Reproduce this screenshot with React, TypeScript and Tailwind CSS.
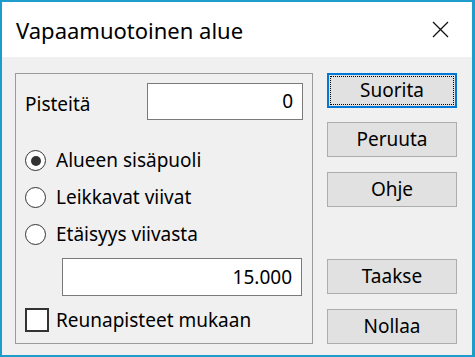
import React from "react";

const font = { fontFamily: '"Noto Sans", "Open Sans", sans-serif' };

function Radio({ label, checked }: { label: string; checked?: boolean }) {
  return (
    <div className="flex h-[37px] items-center">
      <span className="flex h-[21px] w-[21px] items-center justify-center rounded-full border-[1.5px] border-[#333] bg-white">
        {checked && <span className="h-[10px] w-[10px] rounded-full bg-[#333]" />}
      </span>
      <span className="ml-[10px] text-[19px] leading-none text-black">{label}</span>
    </div>
  );
}

function Button({ label, focused }: { label: string; focused?: boolean }) {
  return (
    <button
      className={
        focused
          ? "flex h-[35px] w-[130px] items-center justify-center border-2 border-[#0078d7] bg-[#e1e1e1] p-[1px]"
          : "flex h-[35px] w-[130px] items-center justify-center border border-[#adadad] bg-[#e1e1e1]"
      }
    >
      {focused ? (
        <span className="flex h-full w-full items-center justify-center border border-dotted border-black text-[19px] leading-none text-black">
          {label}
        </span>
      ) : (
        <span className="text-[19px] leading-none text-black">{label}</span>
      )}
    </button>
  );
}

export default function App() {
  return (
    <div
      style={font}
      className="flex h-[357px] w-[475px] flex-col border-t-2 border-l-2 border-r-[3px] border-b-2 border-[#1e9ccc] bg-[#f0f0f0]"
    >
      {/* title bar */}
      <div className="flex h-[55px] shrink-0 items-center justify-between bg-white pl-[14px] pr-[23px]">
        <span className="text-[22px] leading-none text-black">Vapaamuotoinen alue</span>
        <svg width="17" height="17" viewBox="0 0 17 17" aria-hidden="true">
          <path d="M1 1 L16 16 M16 1 L1 16" stroke="#111" strokeWidth="1.3" />
        </svg>
      </div>

      <div className="flex pl-[13px] pt-[16px]">
        {/* group box */}
        <div className="h-[271px] w-[298px] border border-[#9a9a9a] px-[9px] pt-[9px]">
          <div className="flex h-[37px] items-center justify-between">
            <span className="pt-[5px] text-[19px] leading-none text-black">Pisteitä</span>
            <div className="flex h-[37px] w-[156px] items-center justify-end border border-[#7a7a7a] bg-white pr-[9px] text-[19px] leading-none text-black">
              0
            </div>
          </div>
          <div className="mt-[22px]">
            <Radio label="Alueen sisäpuoli" checked />
            <Radio label="Leikkavat viivat" />
            <Radio label="Etäisyys viivasta" />
          </div>
          <div className="ml-[37px] mt-[5px] flex h-[38px] w-[240px] items-center justify-end border border-[#7a7a7a] bg-white pr-[9px] text-[19px] leading-none text-black">
            15.000
          </div>
          <div className="mt-[12px] flex h-[24px] items-center">
            <span className="h-[24px] w-[24px] border-2 border-[#333] bg-white" />
            <span className="ml-[7px] text-[19px] leading-none text-black">Reunapisteet mukaan</span>
          </div>
        </div>

        {/* buttons */}
        <div className="ml-[14px] flex flex-col">
          <Button label="Suorita" focused />
          <div className="mt-[14px]">
            <Button label="Peruuta" />
          </div>
          <div className="mt-[15px]">
            <Button label="Ohje" />
          </div>
          <div className="mt-[52px]">
            <Button label="Taakse" />
          </div>
          <div className="mt-[15px]">
            <Button label="Nollaa" />
          </div>
        </div>
      </div>
    </div>
  );
}
